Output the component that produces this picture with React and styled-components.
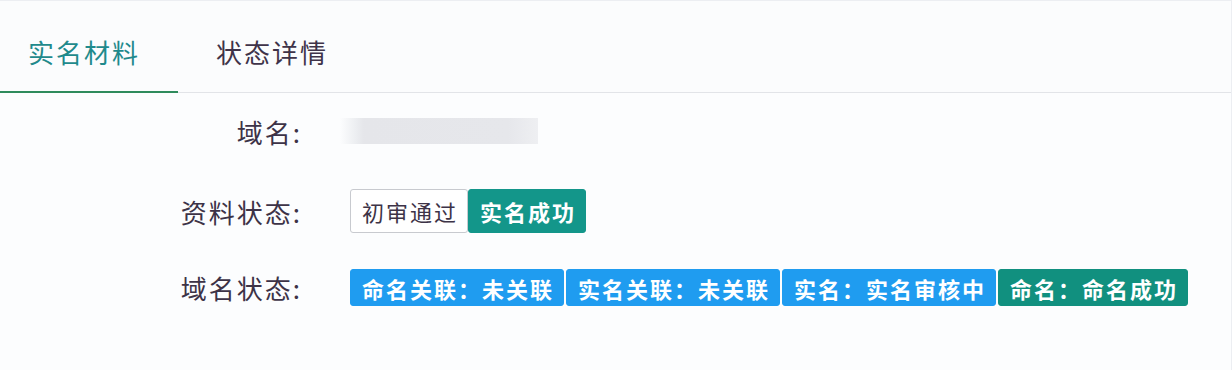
import styled, { createGlobalStyle } from 'styled-components'

const GlobalStyle = createGlobalStyle`
    html, body {
        margin: 0;
        padding: 0;
        background: #fcfdfe;
    }
    body {
        font-family: "Noto Sans CJK SC", "Noto Sans", sans-serif;
    }
`

const tagColors = {
    plain: { bg: '#ffffff', fg: '#3d3347', border: '#c8cacf' },
    teal: { bg: '#13968a', fg: '#ffffff', border: '#13968a' },
    blue: { bg: '#1f9cf0', fg: '#ffffff', border: '#1f9cf0' },
    green: { bg: '#11907f', fg: '#ffffff', border: '#11907f' },
}

const statusTags = [
    { text: '命名关联：未关联', color: 'blue' },
    { text: '实名关联：未关联', color: 'blue' },
    { text: '实名：实名审核中', color: 'blue' },
    { text: '命名：命名成功', color: 'green' },
]

export default function App() {
    return (
        <>
            <GlobalStyle />
            <Panel>
                <TabBar>
                    <Tab active>实名材料</Tab>
                    <Tab>状态详情</Tab>
                </TabBar>
                <Form>
                    <Row height={44}>
                        <Label>域名:</Label>
                        <Blurred />
                    </Row>
                    <Row height={44}>
                        <Label>资料状态:</Label>
                        <TagGroup gap={0}>
                            <Tag color="plain">初审通过</Tag>
                            <Tag color="teal" bold>实名成功</Tag>
                        </TagGroup>
                    </Row>
                    <Row height={35}>
                        <Label>域名状态:</Label>
                        <TagGroup gap={2}>
                            {statusTags.map(t => (
                                <Tag key={t.text} color={t.color} bold>{t.text}</Tag>
                            ))}
                        </TagGroup>
                    </Row>
                </Form>
            </Panel>
        </>
    )
}

const Panel = styled.div`
    box-sizing: border-box;
    width: 1232px;
    height: 370px;
    background: #fcfdfe;
    border-top: 1px solid #eceef2;
    border-right: 1px solid #eceef2;
`

const TabBar = styled.div`
    display: flex;
    gap: 10px;
    height: 91px;
    background: #fbfcfd;
    border-bottom: 1px solid #e2e4e8;
`

const Tab = styled.div`
    position: relative;
    display: flex;
    align-items: center;
    padding: 9px 38px 0 28px;
    font-size: 26px;
    letter-spacing: 2px;
    color: ${props => props.active ? '#1f8a8c' : '#3f3349'};
    cursor: pointer;

    &::after {
        content: '';
        display: ${props => props.active ? 'block' : 'none'};
        position: absolute;
        left: 0;
        right: 0;
        bottom: -1px;
        height: 2px;
        background: #2f8b5c;
    }
`

const Form = styled.div`
    display: flex;
    flex-direction: column;
    gap: 36px;
    padding-top: 16px;
`

const Row = styled.div`
    display: grid;
    grid-template-columns: 302px 1fr;
    column-gap: 48px;
    align-items: center;
    height: ${props => props.height}px;
`

const Label = styled.div`
    text-align: right;
    font-size: 26px;
    letter-spacing: 2px;
    color: #3d3347;
    white-space: nowrap;
`

const Blurred = styled.div`
    width: 198px;
    height: 26px;
    margin-left: -10px;
    background: linear-gradient(90deg, rgba(232, 233, 237, 0) 0%, #eceef1 8%, #e5e6ea 12%, #e6e7eb 85%, #eeeff2 100%);
`

const TagGroup = styled.div`
    display: flex;
    gap: ${props => props.gap}px;
    height: 100%;
`

const Tag = styled.span`
    box-sizing: border-box;
    display: flex;
    align-items: center;
    height: 100%;
    padding: 0 9px 0 11px;
    border-radius: 3px;
    border: 1px solid ${props => tagColors[props.color].border};
    background: ${props => tagColors[props.color].bg};
    color: ${props => tagColors[props.color].fg};
    font-size: 22px;
    font-weight: ${props => props.bold ? 700 : 400};
    letter-spacing: 2px;
    white-space: nowrap;
`
